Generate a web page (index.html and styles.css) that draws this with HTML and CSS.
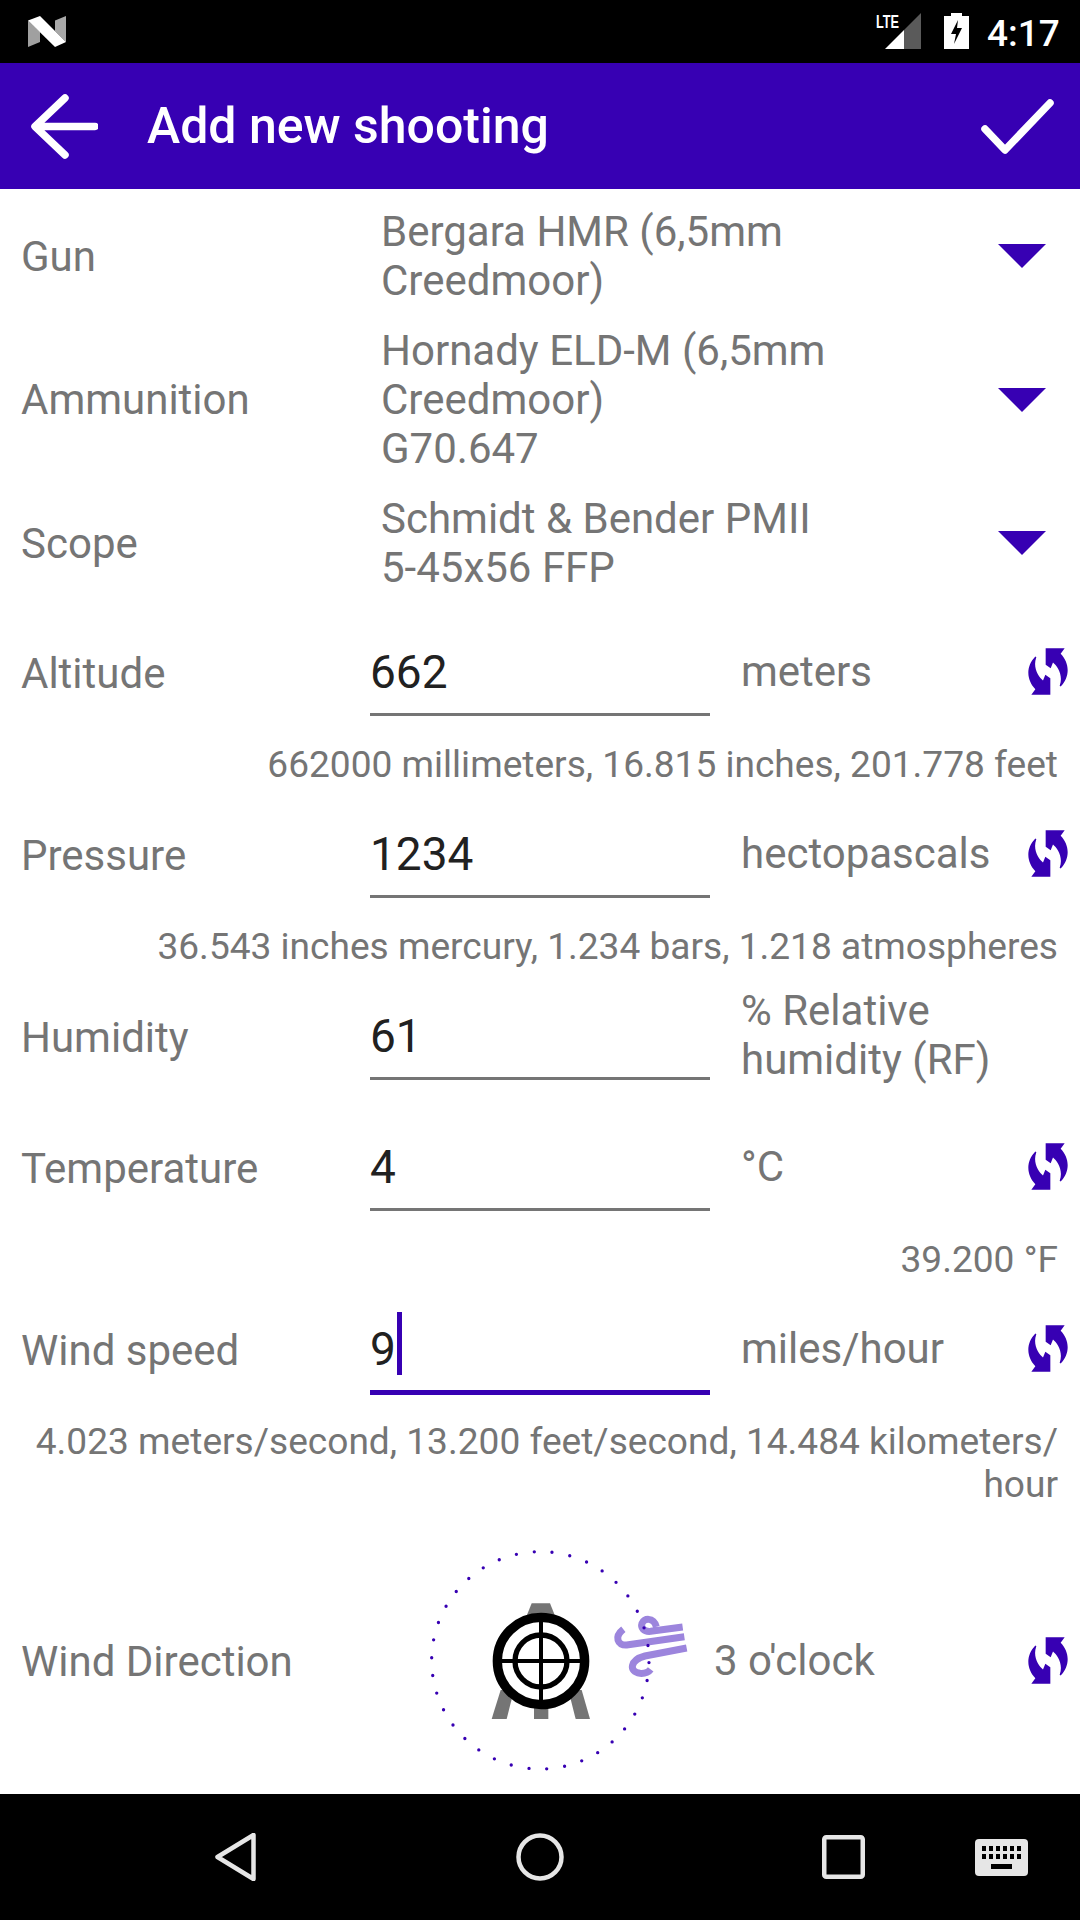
FILE: index.html
```html
<!DOCTYPE html>
<html lang="en">
<head>
<meta charset="utf-8">
<title>Add new shooting</title>
<link rel="stylesheet" href="styles.css">
</head>
<body>
<div class="screen">
  <header class="status">
    <svg class="n-logo" viewBox="0 0 38 31"><path d="M0 4.500 12 16V26L0 31Z" fill="#a0a0a0"/><path d="M27 4.500 38 0V26L27 15Z" fill="#a8a8a8"/><path d="M0 4.500 12 0 38 26 27 31Z" fill="#fff"/></svg>
    <svg class="signal" viewBox="0 0 46 36"><text class="lte" x="0" y="15" textLength="23" lengthAdjust="spacingAndGlyphs">LTE</text><path d="M9 36 28 17V36Z" fill="#fff"/><path d="M28 17 45 0V36H28Z" fill="#5a5a5a"/></svg>
    <svg class="battery" viewBox="0 0 25 36"><path d="M7 0H18V3H25V36H0V3H7Z" fill="#fff"/><path d="M14 7 7 21H12L10 31 18 15H13Z" fill="#000"/></svg>
    <span class="clock">4:17</span>
  </header>
  <div class="toolbar">
    <svg class="tb-back" viewBox="0 0 67 65"><path d="M34 4 4 32.500 34 61M5 32.500H64" fill="none" stroke="#fff" stroke-width="7.500" stroke-linecap="round" stroke-linejoin="round"/></svg>
    <h1 class="title">Add new shooting</h1>
    <svg class="tb-check" viewBox="0 0 73 55"><path d="M4 30 24 51 69 4" fill="none" stroke="#fff" stroke-width="7.500" stroke-linecap="round" stroke-linejoin="round"/></svg>
  </div>
  <main class="form">
    <section class="spinners">
      <div class="spin-row"><span class="label">Gun</span><div class="spin-text">Bergara HMR (6,5mm<br>Creedmoor)</div><svg class="arrow" viewBox="0 0 48 24"><path d="M0 0H48L24 24Z"/></svg></div>
      <div class="spin-row"><span class="label">Ammunition</span><div class="spin-text">Hornady ELD-M (6,5mm<br>Creedmoor)<br>G70.647</div><svg class="arrow" viewBox="0 0 48 24"><path d="M0 0H48L24 24Z"/></svg></div>
      <div class="spin-row"><span class="label">Scope</span><div class="spin-text">Schmidt &amp; Bender PMII<br>5-45x56 FFP</div><svg class="arrow" viewBox="0 0 48 24"><path d="M0 0H48L24 24Z"/></svg></div>
    </section>

    <div class="field first"><span class="label">Altitude</span><div class="input">662</div><div class="unit">meters</div><svg class="sync" viewBox="85 52 120 143"><use href="#sync-shape"/></svg></div>
    <p class="helper">662000 millimeters, 16.815 inches, 201.778 feet</p>

    <div class="field"><span class="label">Pressure</span><div class="input">1234</div><div class="unit">hectopascals</div><svg class="sync" viewBox="85 52 120 143"><use href="#sync-shape"/></svg></div>
    <p class="helper">36.543 inches mercury, 1.234 bars, 1.218 atmospheres</p>

    <div class="field"><span class="label">Humidity</span><div class="input">61</div><div class="unit">% Relative<br>humidity (RF)</div></div>

    <div class="field spaced"><span class="label">Temperature</span><div class="input">4</div><div class="unit">°C</div><svg class="sync" viewBox="85 52 120 143"><use href="#sync-shape"/></svg></div>
    <p class="helper">39.200 °F</p>

    <div class="field"><span class="label">Wind speed</span><div class="input active">9<i class="caret"></i></div><div class="unit">miles/hour</div><svg class="sync" viewBox="85 52 120 143"><use href="#sync-shape"/></svg></div>
    <p class="helper">4.023 meters/second, 13.200 feet/second, 14.484 kilometers/<br>hour</p>

    <div class="wind-row">
      <span class="label">Wind Direction</span>
      <svg class="dial" viewBox="0 0 900 780">
        <g fill="#757575">
          <path d="M365 220H420L440 270H345Z"/>
          <path d="M245 567H290L312 480H272Z"/>
          <path d="M372 567H415V500H372Z"/>
          <path d="M540 567H497L475 480H515Z"/>
        </g>
        <circle cx="393" cy="393" r="131" fill="#fff" stroke="#000" stroke-width="28"/>
        <circle cx="393" cy="393" r="78" fill="none" stroke="#000" stroke-width="16"/>
        <path d="M270 393H516M393 270V516" stroke="#000" stroke-width="12"/>
        <g fill="none" stroke="#9c85dd" stroke-width="21">
          <path d="M818 291 722 304C700 306 692 292 696 280 701 265 730 260 739 290"/>
          <path d="M823 320 650 345C622 347 612 320 640 298"/>
          <path d="M830 354 705 378C660 390 655 425 690 430 705 431 716 426 722 418"/>
        </g>
        <circle class="dots" cx="391" cy="391" r="326"/>
      </svg>
      <div class="wind-value">3 o'clock</div>
      <svg class="sync" viewBox="85 52 120 143"><use href="#sync-shape"/></svg>
    </div>
  </main>
  <footer class="nav">
    <svg class="nav-back" viewBox="0 0 41 48"><path d="M38.500 2 2.500 24 38.500 46Z" fill="none" stroke="#e6e6e6" stroke-width="4.500" stroke-linejoin="round"/></svg>
    <svg class="nav-home" viewBox="0 0 48 48"><circle cx="24" cy="24" r="21.500" fill="none" stroke="#e6e6e6" stroke-width="4.500"/></svg>
    <svg class="nav-recent" viewBox="0 0 43 44"><rect x="2.250" y="2.250" width="38.500" height="39.500" rx="2" fill="none" stroke="#e6e6e6" stroke-width="4.500"/></svg>
    <svg class="nav-kbd" viewBox="0 0 53 37"><rect width="53" height="37" rx="4" fill="#e6e6e6"/><g fill="#000"><path d="M7 7h4v5H7zM14 7h4v5h-4zM21 7h4v5h-4zM28 7h4v5h-4zM35 7h4v5h-4zM42 7h4v5h-4zM7 15h4v5H7zM14 15h4v5h-4zM21 15h4v5h-4zM28 15h4v5h-4zM35 15h4v5h-4zM42 15h4v5h-4zM16 25h21v5H16z"/></g></svg>
  </footer>
</div>
<svg class="defs" aria-hidden="true"><defs><path id="sync-shape" fill="#3700b3" d="M138 55H195L183 72C210 100 212 140 183 170L180 168C192 135 172 108 160 98L153 115 138 105ZM152 195H95L107 178C80 150 78 110 107 80L110 82C98 115 118 142 130 152L137 135 152 145Z"/></defs></svg>
</body>
</html>
```

FILE: styles.css
```css
* { box-sizing: border-box; }
html, body { margin: 0; padding: 0; }
body { width: 1080px; height: 1920px; overflow: hidden; background: #fff; font-family: Roboto, sans-serif; }
.defs { width: 0; height: 0; display: block; }
.screen { width: 1080px; height: 1920px; display: flex; flex-direction: column; }

.status { height: 63px; background: #000; display: flex; align-items: flex-start; flex: none; }
.n-logo { width: 38px; height: 31px; margin: 16px 0 0 28px; }
.signal { width: 46px; height: 36px; margin: 13px 0 0 810px; overflow: visible; }
.lte { font: 700 18px "Liberation Sans", sans-serif; fill: #fff; }
.battery { width: 25px; height: 36px; margin: 13px 0 0 22px; }
.clock { color: #fff; font-size: 37px; font-weight: 500; line-height: 37px; margin: 15px 0 0 18px; }

.toolbar { height: 126px; background: #3700b3; display: flex; align-items: center; flex: none; }
.tb-back { width: 67px; height: 65px; margin-left: 31px; }
.title { margin: 0 0 0 49px; color: #fff; font-size: 50px; font-weight: 500; flex: 1; }
.tb-check { width: 73px; height: 55px; margin-right: 26px; }

.form { flex: 1; min-height: 0; padding: 18px 22px 0 21px; color: #757575; font-size: 42px; }
.label { width: 349px; flex: none; color: #757575; font-size: 42px; line-height: 49px; }

.spinners { display: flex; flex-direction: column; gap: 21px; }
.spin-row { display: flex; align-items: center; }
.spin-text { margin-left: 11px; line-height: 49px; flex: 1; }
.arrow { width: 48px; height: 24px; fill: #3700b3; margin-right: 12px; }

.field { height: 86px; display: flex; align-items: center; margin-top: 26px; }
.field.first { margin-top: 38px; }
.field.spaced { margin-top: 45px; }
.input { width: 340px; height: 86px; flex: none; border-bottom: 3px solid #757575; color: #212121; font-size: 46px; display: flex; align-items: center; }
.input.active { height: 88px; margin-bottom: -2px; border-bottom: 5px solid #3700b3; }
.caret { width: 5px; height: 63px; background: #3700b3; margin-left: 1px; margin-top: -10px; }
.unit { margin: 0 0 4px 31px; line-height: 49px; flex: 1; }
.sync { width: 40px; height: 48px; flex: none; fill: #3700b3; margin: 0 -10px 4px 0; }

.helper { margin: 27px 0 0; font-size: 37.100px; line-height: 43px; text-align: right; }

.wind-row { height: 260px; margin-top: 24px; display: flex; align-items: center; }
.wind-row .label { width: 389px; padding-top: 2px; }
.wind-row .sync { margin-bottom: 0; }
.dial { width: 300px; height: 260px; flex: none; }
.dots { fill: none; stroke: #3700b3; stroke-width: 10; stroke-linecap: round; stroke-dasharray: 0 53.900; stroke-dashoffset: -7; }
.wind-value { margin-left: 4px; flex: 1; }

.nav { height: 126px; background: #000; display: flex; align-items: center; padding-left: 215px; flex: none; }
.nav-back { width: 41px; height: 48px; }
.nav-home { width: 48px; height: 48px; margin-left: 260px; }
.nav-recent { width: 43px; height: 44px; margin-left: 258px; }
.nav-kbd { width: 53px; height: 37px; margin-left: 110px; }
```
